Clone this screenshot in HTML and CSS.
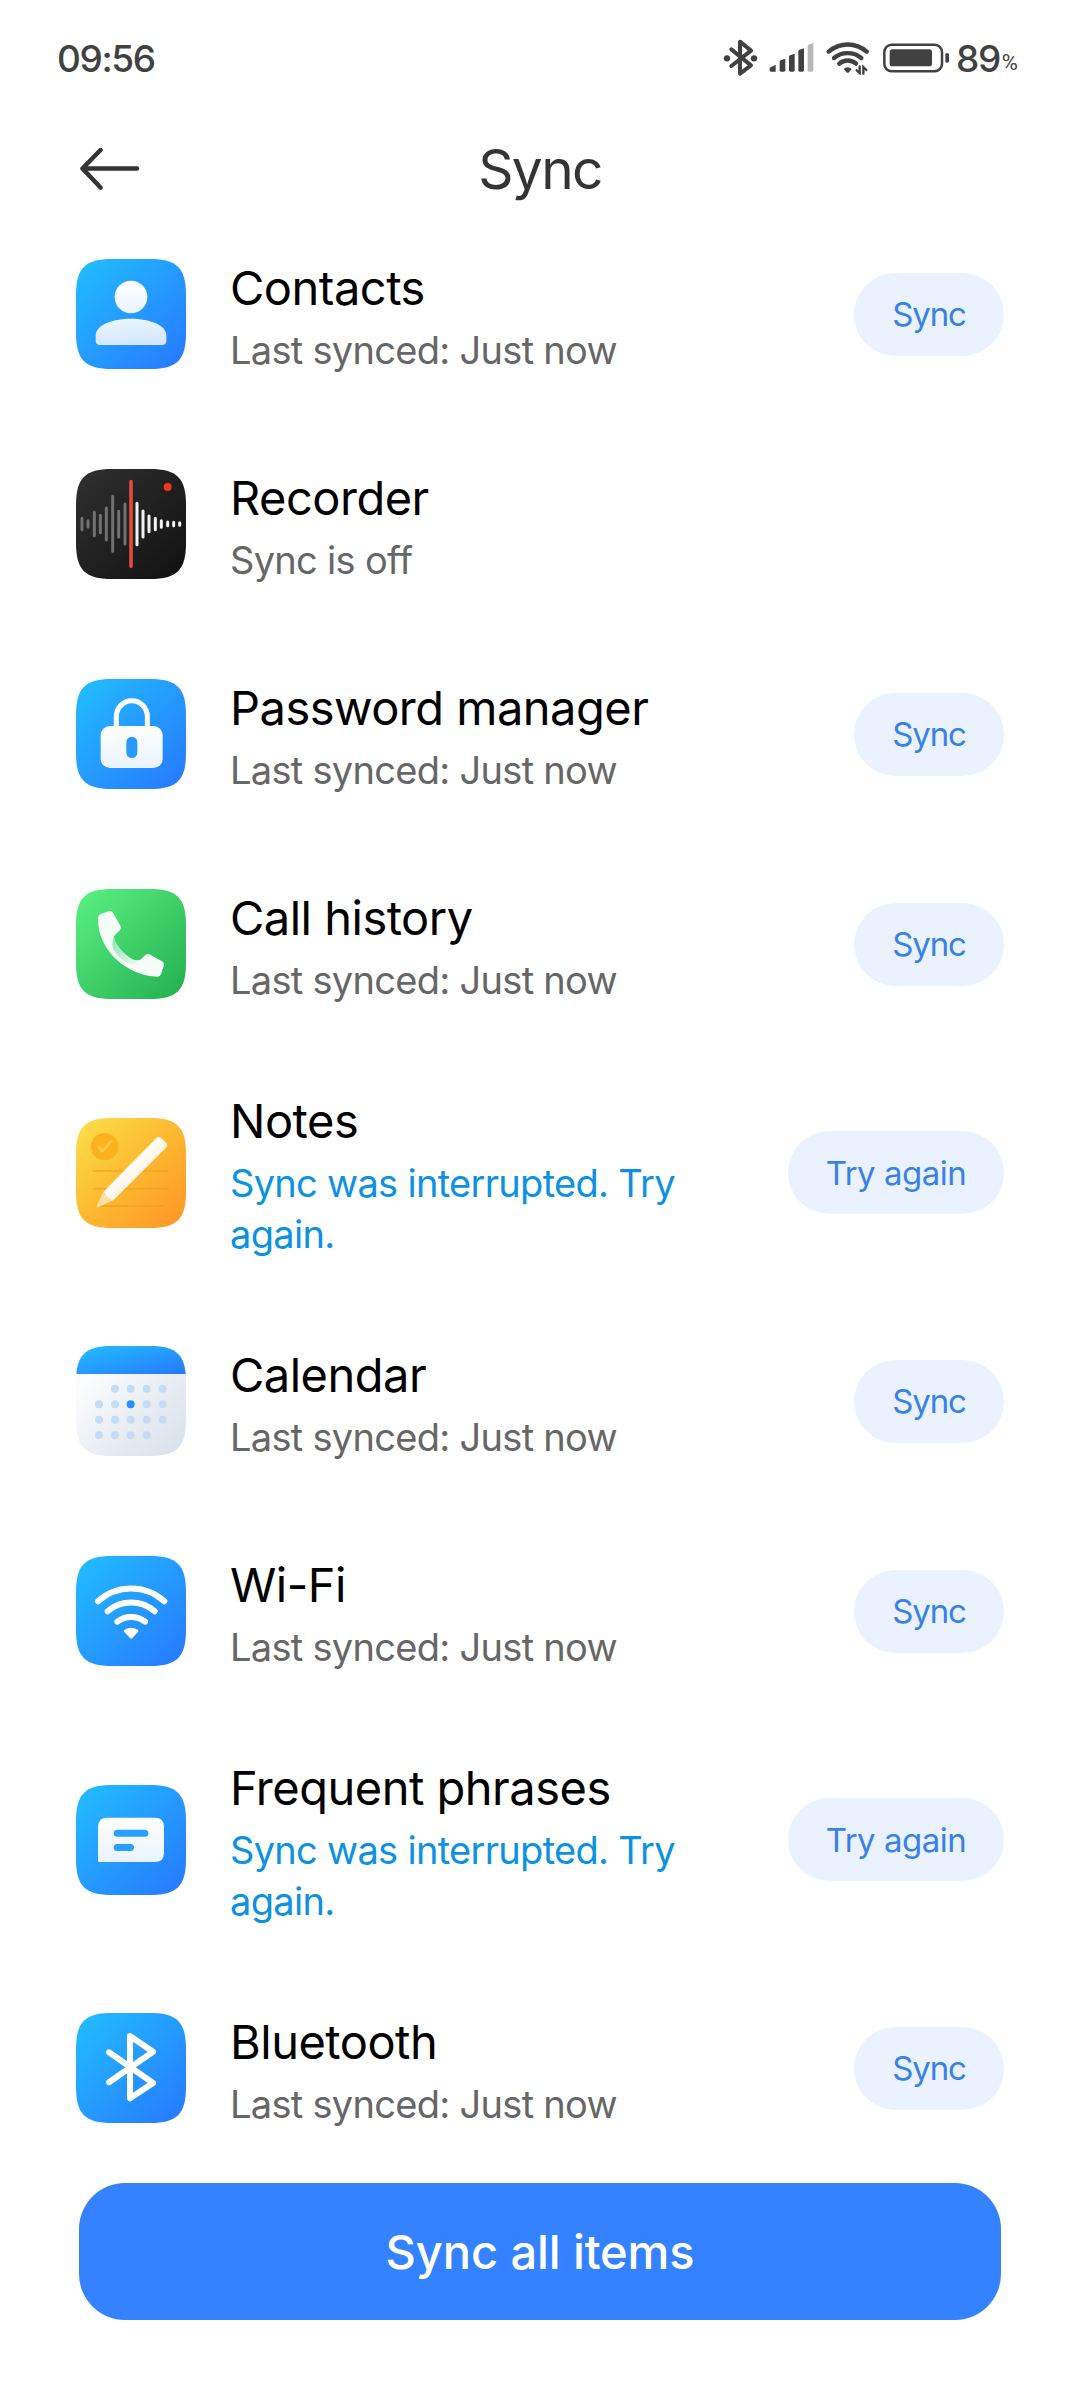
FILE: index.html
```html
<!DOCTYPE html>
<html lang="en">
<head>
    <meta charset="UTF-8">
    <meta name="viewport" content="width=device-width, initial-scale=1.0">
    <title>Sync</title>
    <link rel="stylesheet" href="styles.css">
</head>
<body>

    <!-- Shared gradients and icon tile shape -->
    <svg class="defs" width="0" height="0" aria-hidden="true">
        <defs>
            <linearGradient id="blue" x1="0" y1="0" x2="1" y2="1">
                <stop offset="0.05" stop-color="#22bbff"/>
                <stop offset="0.95" stop-color="#277bff"/>
            </linearGradient>
            <linearGradient id="black" x1="0" y1="0" x2="1" y2="1">
                <stop offset="0" stop-color="#303030"/>
                <stop offset="1" stop-color="#111111"/>
            </linearGradient>
            <linearGradient id="green" x1="0" y1="0" x2="1" y2="1">
                <stop offset="0.05" stop-color="#58ee80"/>
                <stop offset="0.95" stop-color="#25b252"/>
            </linearGradient>
            <linearGradient id="yellow" x1="0" y1="0" x2="1" y2="1">
                <stop offset="0.05" stop-color="#fbdd48"/>
                <stop offset="0.5" stop-color="#fdb931"/>
                <stop offset="0.95" stop-color="#ff9727"/>
            </linearGradient>
            <linearGradient id="paper" x1="0" y1="0" x2="1" y2="1">
                <stop offset="0.2" stop-color="#fbfcfd"/>
                <stop offset="0.95" stop-color="#d9e1ea"/>
            </linearGradient>
            <linearGradient id="white" x1="0" y1="0" x2="0" y2="1">
                <stop offset="0" stop-color="#ffffff"/>
                <stop offset="1" stop-color="#e9f3ff"/>
            </linearGradient>
            <linearGradient id="body" x1="0" y1="0" x2="0.2" y2="1">
                <stop offset="0" stop-color="#edf6ff"/>
                <stop offset="1" stop-color="#d5e8ff"/>
            </linearGradient>
            <linearGradient id="neck" x1="0" y1="0" x2="1" y2="1">
                <stop offset="0" stop-color="#8be3ab"/>
                <stop offset="1" stop-color="#f0faf3"/>
            </linearGradient>
            <linearGradient id="pencil" x1="0.3" y1="0.3" x2="0.65" y2="0.65">
                <stop offset="0.3" stop-color="#ffffff"/>
                <stop offset="1" stop-color="#fff0dc"/>
            </linearGradient>
            <path id="tile" d="M0 108C0 27 27 0 108 0H222C303 0 330 27 330 108V222C330 303 303 330 222 330H108C27 330 0 303 0 222Z"/>
            <clipPath id="tile-clip"><use href="#tile"/></clipPath>
        </defs>
    </svg>

    <!-- Status Bar -->
    <div class="status-bar">
        <div class="time">09:56</div>
        <div class="status-icons">
            <svg class="status-bt" width="36" height="38" viewBox="0 0 108 114" fill="none" stroke="#414141" stroke-width="12" stroke-linecap="round" stroke-linejoin="round">
                <path d="M25 31L84 79L51 104V8L84 35L25 81"/>
                <circle cx="12" cy="58" r="9.500" fill="#414141" stroke="none"/>
                <circle cx="93" cy="58" r="9.500" fill="#414141" stroke="none"/>
            </svg>
            <svg class="status-signal" width="45" height="30" viewBox="0 0 135 90" fill="#414141">
                <path d="M2 74L20 65V86H6Q2 86 2 82Z"/>
                <path d="M32 57Q32 54 35 52L49 47V82Q49 86 45 86H36Q32 86 32 82Z"/>
                <path d="M60 42Q60 39 63 37L77 32V82Q77 86 73 86H64Q60 86 60 82Z"/>
                <path d="M88 25Q88 22 91 20L105 16V82Q105 86 101 86H92Q88 86 88 82Z"/>
                <path fill="#b8b8b8" d="M116 11Q116 7 119 5L133 0V82Q133 86 129 86H120Q116 86 116 82Z"/>
            </svg>
            <svg class="status-wifi" width="44" height="34" viewBox="0 0 132 102" fill="none" stroke="#414141" stroke-width="13" stroke-linecap="round">
                <path d="M8 32A86 86 0 0 1 122 32"/>
                <path d="M24 51A64 64 0 0 1 106 51"/>
                <path d="M40 68A38 38 0 0 1 90 68"/>
                <path d="M53 84Q65 73 77 84L69 94Q65 97 61 94Z" fill="#414141" stroke="none"/>
                <path d="M101 76V96L92 88M112 98V78L121 87" stroke-width="7"/>
            </svg>
            <svg class="status-battery" width="67" height="30" viewBox="0 0 201 90">
                <rect x="4" y="5" width="173" height="80" rx="22" fill="none" stroke="#414141" stroke-width="7.500"/>
                <rect x="20" y="19" width="127" height="51" rx="8" fill="#414141"/>
                <rect x="187" y="30" width="11" height="29" rx="5" fill="#414141"/>
            </svg>
            <span class="battery-level">89</span><span class="percent">%</span>
        </div>
    </div>

    <!-- Header -->
    <header class="header">
        <svg class="back" width="60" height="43" viewBox="0 0 60 43" fill="none" stroke="#343434" stroke-width="4.500" stroke-linecap="round" stroke-linejoin="round">
            <path d="M20.500 2L2.500 20.500L20.500 39.500M2.500 20.500H57"/>
        </svg>
        <h1>Sync</h1>
    </header>

    <main class="list">

        <div class="row">
            <svg class="icon" viewBox="0 0 330 330">
                <use href="#tile" fill="url(#blue)"/>
                <circle cx="165" cy="114" r="49" fill="url(#white)"/>
                <path fill="url(#body)" d="M59 229C59 199 108 179 165 179S271 199 271 229V245Q271 258 257 258H73Q59 258 59 245Z"/>
            </svg>
            <div class="text">
                <div class="title">Contacts</div>
                <div class="sub">Last synced: Just now</div>
            </div>
            <button class="pill">Sync</button>
        </div>

        <div class="row">
            <svg class="icon" viewBox="0 0 330 330" stroke-width="9" stroke-linecap="round">
                <use href="#tile" fill="url(#black)"/>
                <path stroke="#717171" d="M18 148V182M36 155V174M55 130V200M73 139V191M91 117V213M110 82V247M128 127V204M147 105V225"/>
                <path stroke="#f2f2f2" d="M183 103V227M201 126V204M219 141V188M238 148V182M256 155V175M275 159V170M293 160V170M311 161V169"/>
                <path stroke="#e04a3c" stroke-width="11" d="M165 38V292"/>
                <circle cx="275" cy="54" r="12" fill="#f53522"/>
            </svg>
            <div class="text">
                <div class="title">Recorder</div>
                <div class="sub">Sync is off</div>
            </div>
        </div>

        <div class="row">
            <svg class="icon" viewBox="0 0 330 330">
                <use href="#tile" fill="url(#blue)"/>
                <path fill="none" stroke="#fff" stroke-width="15" d="M121 145V112A46.500 46.500 0 0 1 214 112V145"/>
                <rect x="74" y="141" width="186" height="126" rx="28" fill="url(#white)"/>
                <rect x="151" y="173" width="33" height="64" rx="16.500" fill="#2799ff"/>
            </svg>
            <div class="text">
                <div class="title">Password manager</div>
                <div class="sub">Last synced: Just now</div>
            </div>
            <button class="pill">Sync</button>
        </div>

        <div class="row">
            <svg class="icon" viewBox="0 0 330 330">
                <use href="#tile" fill="url(#green)"/>
                <path fill="#f6fdf8" d="M66 90C65 80 70 76 76 74L98 67Q107 64 111 71L134 112Q137 118 132 123L114 141C113 165 150 203 172 212Q188 217 195 211L209 197Q214 193 220 196L258 217Q265 221 264 228L255 256Q252 263 245 263C160 262 66 190 66 90Z"/>
                <path fill="url(#neck)" d="M114 141C113 165 150 203 172 212Q182 215 189 214C183 222 173 228 162 226C140 216 106 190 109 160Q110 150 114 141Z"/>
            </svg>
            <div class="text">
                <div class="title">Call history</div>
                <div class="sub">Last synced: Just now</div>
            </div>
            <button class="pill">Sync</button>
        </div>

        <div class="row">
            <svg class="icon" viewBox="0 0 330 330">
                <use href="#tile" fill="url(#yellow)"/>
                <circle cx="86" cy="86" r="41" fill="#fbb21c"/>
                <path fill="none" stroke="#fdcb4a" stroke-width="8" stroke-linecap="round" stroke-linejoin="round" d="M67 86L80 99L105 70"/>
                <path stroke="#f39d1c" stroke-opacity="0.6" stroke-width="6" d="M50 159H278M50 212H278M70 264H264"/>
                <path fill="#ffdfa6" d="M84 218L112 247L68 267Q60 269 63 261Z"/>
                <path fill="url(#pencil)" d="M84 220L239 62Q247 53 255 60L270 74Q277 82 269 90L112 247Q107 248 104 243Q93 238 90 229Q84 226 84 220Z"/>
            </svg>
            <div class="text">
                <div class="title">Notes</div>
                <div class="sub interrupted">Sync was interrupted. Try again.</div>
            </div>
            <button class="pill wide">Try again</button>
        </div>

        <div class="row">
            <svg class="icon" viewBox="0 0 330 330">
                <g clip-path="url(#tile-clip)">
                    <rect width="330" height="330" fill="url(#paper)"/>
                    <rect width="330" height="84" fill="url(#blue)"/>
                </g>
                <!-- each dot is a zero-length round dash -->
                <path stroke="#c3ddf6" stroke-width="24" stroke-linecap="round" d="M117 128h0M164 128h0M212 128h0M260 128h0M69 175h0M117 175h0M212 175h0M260 175h0M69 221h0M117 221h0M164 221h0M212 221h0M260 221h0M69 268h0M117 268h0M164 268h0M212 268h0"/>
                <circle cx="164" cy="175" r="12" fill="#2b8df5"/>
            </svg>
            <div class="text">
                <div class="title">Calendar</div>
                <div class="sub">Last synced: Just now</div>
            </div>
            <button class="pill">Sync</button>
        </div>

        <div class="row">
            <svg class="icon" viewBox="0 0 330 330">
                <use href="#tile" fill="url(#blue)"/>
                <g fill="none" stroke="#fff" stroke-width="18" stroke-linecap="round">
                    <path d="M66 136A148 148 0 0 1 265 136"/>
                    <path d="M95 166A108 108 0 0 1 236 166"/>
                    <path d="M124 197A68 68 0 0 1 207 197"/>
                </g>
                <path fill="#fff" d="M145 228Q141 224 146 221Q165 209 185 221Q190 224 186 228L169 246Q165.500 250 162 246Z"/>
            </svg>
            <div class="text">
                <div class="title">Wi-Fi</div>
                <div class="sub">Last synced: Just now</div>
            </div>
            <button class="pill">Sync</button>
        </div>

        <div class="row">
            <svg class="icon" viewBox="0 0 330 330">
                <use href="#tile" fill="url(#blue)"/>
                <path fill="url(#white)" d="M66 126Q66 98 94 98H236Q264 98 264 126V203Q264 231 236 231H70Q66 231 66 227Z"/>
                <rect x="113" y="134" width="104" height="21" rx="10.500" fill="#27a0ff"/>
                <rect x="113" y="177" width="61" height="21" rx="10.500" fill="#27a0ff"/>
            </svg>
            <div class="text">
                <div class="title">Frequent phrases</div>
                <div class="sub interrupted">Sync was interrupted. Try again.</div>
            </div>
            <button class="pill wide">Try again</button>
        </div>

        <div class="row">
            <svg class="icon" viewBox="0 0 330 330">
                <use href="#tile" fill="url(#blue)"/>
                <path fill="none" stroke="#fff" stroke-width="18" stroke-linecap="round" stroke-linejoin="round" d="M99 118L231 210L162 256V69L231 116L99 208"/>
            </svg>
            <div class="text">
                <div class="title">Bluetooth</div>
                <div class="sub">Last synced: Just now</div>
            </div>
            <button class="pill">Sync</button>
        </div>

    </main>

    <footer class="footer">
        <button class="sync-all">Sync all items</button>
    </footer>

</body>
</html>
```
FILE: styles.css
```css
* {
    box-sizing: border-box;
}

body {
    margin: 0;
    width: 1080px;
    height: 2400px;
    overflow: hidden;
    background: #fff;
    font-family: Inter, Roboto, sans-serif;
    color: #000;
}

svg {
    display: block;
    flex: none;
}

.defs {
    position: absolute;
}

/* status bar */
.status-bar {
    display: flex;
    align-items: center;
    height: 116px;
    padding-left: 57px;
    color: #414141;
    font-size: 37px;
    font-weight: 500;
}

.time {
    width: 666px;
    letter-spacing: -1.4px;
}

.status-icons {
    display: flex;
    align-items: center;
}

.status-signal {
    margin-left: 10px;
}

.status-wifi {
    margin-left: 12px;
}

.status-battery {
    margin-left: 13px;
}

.battery-level {
    margin-left: 6px;
    letter-spacing: -1.4px;
}

.percent {
    padding: 9px 0 0 2px;
    font-family: Roboto, sans-serif;
    font-size: 22px;
    font-weight: 400;
}

/* header */
.header {
    display: grid;
    grid-template-columns: 60px 1fr 60px;
    align-items: center;
    height: 93px;
    padding: 13px 80px 0;
}

.header h1 {
    margin: 0;
    text-align: center;
    font-size: 55px;
    font-weight: 400;
    letter-spacing: -1.6px;
    color: #343434;
}

/* list */
.row {
    display: flex;
    align-items: center;
    gap: 44px;
    min-height: 210px;
    padding: 35px 76px;
}

.icon {
    width: 110px;
    height: 110px;
}

.text {
    flex: 1;
    padding-bottom: 1px;
}

.title {
    font-size: 47px;
    line-height: 74px;
    letter-spacing: -0.5px;
}

.sub {
    max-width: 480px;
    font-size: 38px;
    line-height: 51px;
    letter-spacing: -0.7px;
    color: #666;
}

.interrupted {
    color: #0d91e3;
}

.pill {
    width: 150px;
    height: 83px;
    padding: 0;
    border: none;
    border-radius: 42px;
    background: #eaf2ff;
    color: #3981e6;
    font-family: inherit;
    font-size: 33px;
    letter-spacing: -1.2px;
}

.wide {
    width: 216px;
    letter-spacing: -0.5px;
}

/* footer */
.footer {
    padding: 10px 79px 0;
}

.sync-all {
    width: 100%;
    height: 137px;
    border: none;
    border-radius: 46px;
    background: #3482ff;
    color: #fff;
    font-family: inherit;
    font-size: 47px;
    font-weight: 500;
    letter-spacing: -0.1px;
}
```
